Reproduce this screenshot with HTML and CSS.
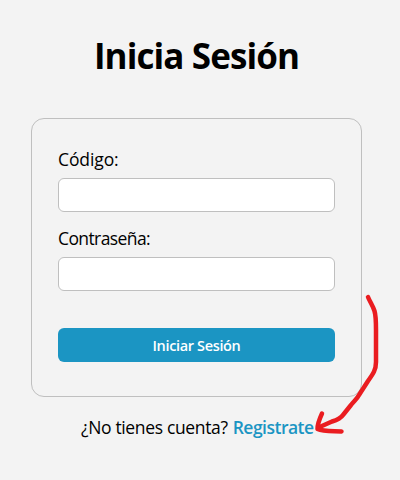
FILE: index.html
```html
<!DOCTYPE html>
<html lang="es">
<head>
<meta charset="utf-8">
<title>Inicia Sesión</title>
<link rel="stylesheet" href="styles.css">
</head>
<body>
<main class="page">
  <h1 class="title">Inicia Sesión</h1>
  <form class="card">
    <label class="label label-code" for="code"><span>Código:</span></label>
    <input class="field" id="code" type="text">
    <label class="label label-password" for="password"><span>Contraseña:</span></label>
    <input class="field" id="password" type="password">
    <button class="submit" type="button"><span>Iniciar Sesión</span></button>
  </form>
  <p class="signup"><span class="question">¿No tienes cuenta?</span><a class="link" href="#">Registrate</a></p>
  <svg class="arrow" viewBox="0 0 400 480" width="400" height="480" aria-hidden="true">
    <path d="M368 297C370 302 373 306 374.500 311C376 316 376 322 376 330V362C376 370 373 374 368 381L359 395C357 399 354 401 351 405L343 415C341 418 337 420 332 421.500L318.500 427.500"/>
    <path d="M322 413.500C319 420 317.500 424 317.500 429C323 431.500 332 431 341.500 431.500"/>
  </svg>
</main>
</body>
</html>
```

FILE: styles.css
```css
* {
  box-sizing: border-box;
}

body {
  margin: 0;
  background: #f3f3f3;
  color: #000;
  font-family: "Segoe UI", "Open Sans", "Noto Sans", sans-serif;
  font-size: 17.5px;
}

.page {
  position: relative;
  height: 480px;
  overflow: hidden;
}

.title {
  margin: 32px 0 38px;
  padding-right: 7px;
  text-align: center;
  font-size: 35px;
  line-height: 48px;
  letter-spacing: -0.9px;
}

.card {
  display: flex;
  flex-direction: column;
  width: 331px;
  height: 279px;
  margin-left: 31px;
  padding: 27px 26px;
  border: 1px solid #bfbfbf;
  border-radius: 13px;
}

.label {
  height: 32px;
  line-height: 26px;
}

.label-code {
  letter-spacing: -0.1px;
}

.label-password {
  margin-top: 13px;
  letter-spacing: -0.6px;
}

.field {
  width: 100%;
  height: 34px;
  border: 1px solid #bfbfbf;
  border-radius: 6px;
  background: #fff;
  outline: none;
}

.submit {
  height: 34px;
  margin-top: 37px;
  padding: 1px 0 0;
  border: 0;
  border-radius: 6px;
  background: #1b95c3;
  color: #fff;
  font: 600 14.5px/33px "Segoe UI", "Open Sans", "Noto Sans", sans-serif;
  letter-spacing: -0.35px;
}

.signup {
  display: flex;
  gap: 5px;
  margin: 17px 0 0 81px;
  line-height: 26px;
  white-space: nowrap;
  letter-spacing: -0.35px;
}

.link {
  color: #1b95c3;
  font-weight: 600;
  letter-spacing: -0.5px;
  text-decoration: none;
}

.arrow {
  position: absolute;
  top: 0;
  left: 0;
  fill: none;
  stroke: #ea1c20;
  stroke-width: 4.5;
  stroke-linecap: round;
  stroke-linejoin: round;
  pointer-events: none;
}
```
